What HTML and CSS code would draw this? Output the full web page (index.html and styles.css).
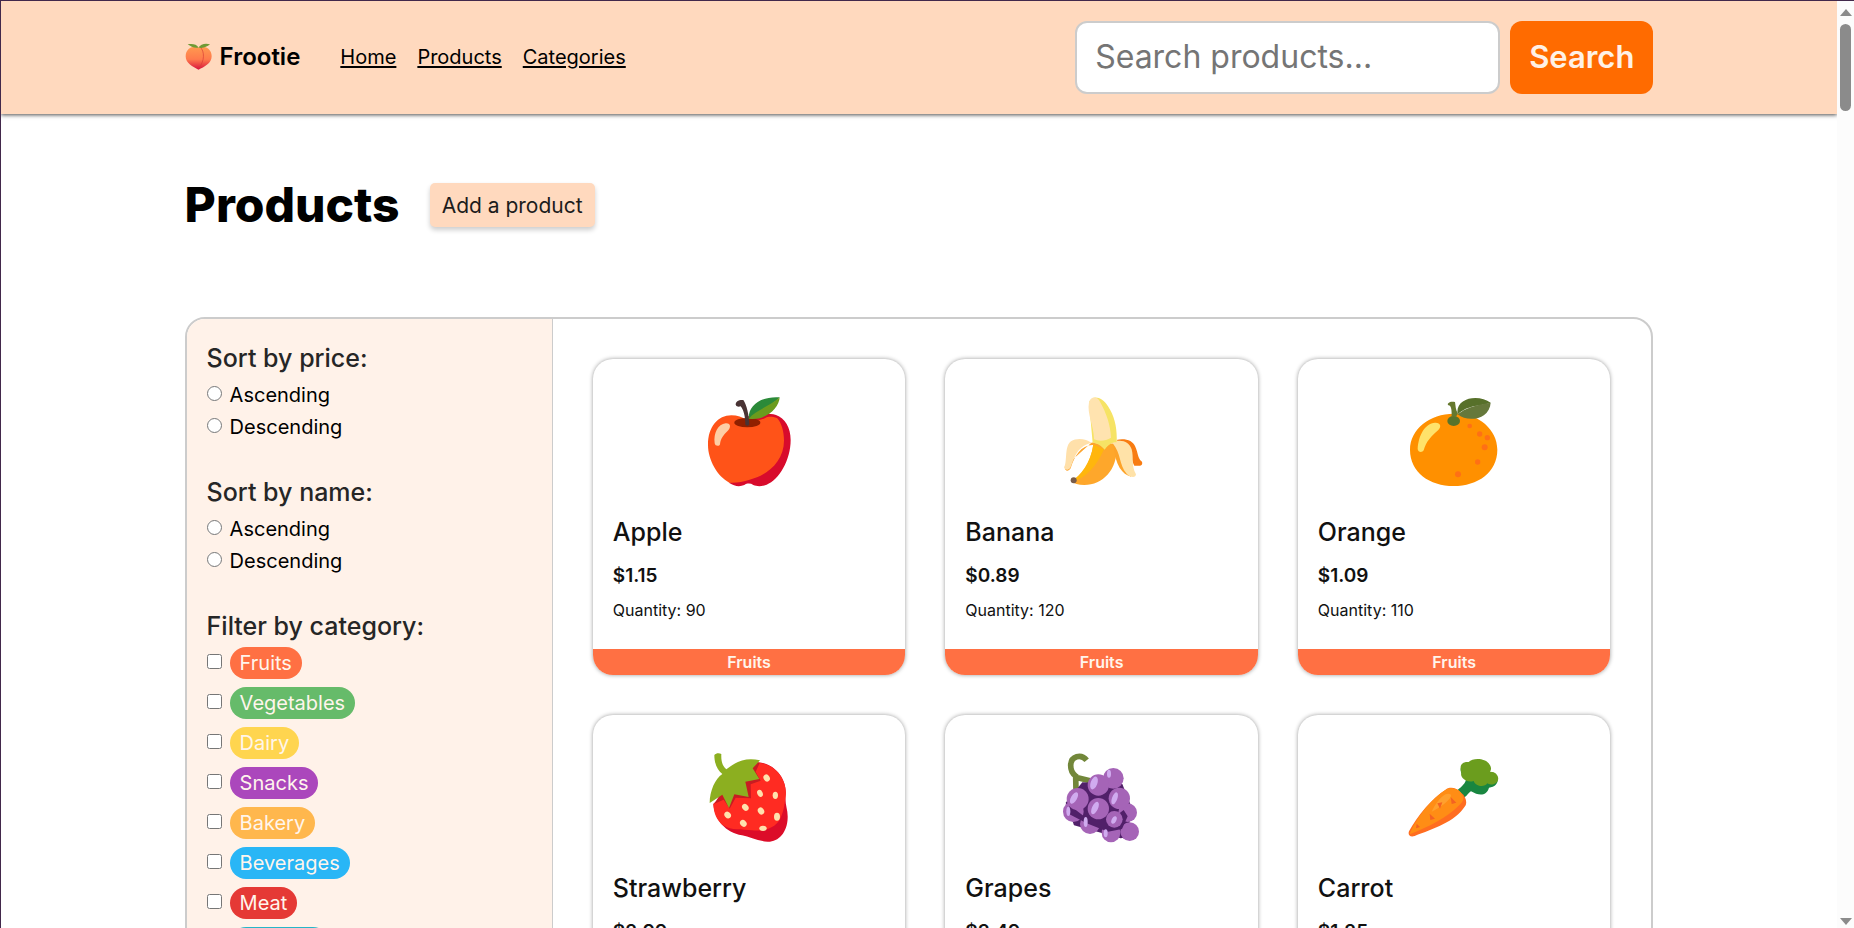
FILE: index.html
```html
<!DOCTYPE html>
<html lang="en">
<head>
<meta charset="utf-8">
<title>Frootie - Products</title>
<link rel="stylesheet" href="styles.css">
</head>
<body>
<div class="page">
  <header class="site-header">
    <div class="container header-row">
      <div class="brand">
        <svg class="brand-icon" viewBox="76 126 82 82" aria-hidden="true">
          <defs><linearGradient id="peach" x1="0" y1="0" x2="0" y2="1"><stop offset="0" stop-color="#ff9a50"/><stop offset=".55" stop-color="#ff7a4c"/><stop offset="1" stop-color="#d8123e"/></linearGradient></defs>
          <path fill="url(#peach)" d="M117 140C104 132 78 140 78 166c0 22 22 31 39 41 17-9 40-19 40-41 0-26-26-34-40-26z"/>
          <path fill="none" stroke="#d83a35" stroke-width="2" d="M122 138c14 14 14 42-4 65"/>
          <path fill="#6f9a35" d="M84 130c13-3 28-1 33 10-12 3-23-3-33-10zM152 130c-14-4-29-1-35 10 14 3 25-2 35-10z"/>
        </svg>
        <span>Frootie</span>
      </div>
      <nav class="nav"><a href="#">Home</a><a href="#">Products</a><a href="#">Categories</a></nav>
      <form class="search">
        <input class="search-input" type="text" placeholder="Search products..." aria-label="Search products">
        <button class="search-button" type="button">Search</button>
      </form>
    </div>
  </header>
  <main class="container">
    <div class="title-row">
      <h1>Products</h1>
      <button class="add-button" type="button">Add a product</button>
    </div>
    <div class="catalog">
      <aside class="filters">
        <fieldset>
          <legend>Sort by price:</legend>
          <label class="option"><input type="radio" name="price"><span>Ascending</span></label>
          <label class="option"><input type="radio" name="price"><span>Descending</span></label>
        </fieldset>
        <fieldset>
          <legend>Sort by name:</legend>
          <label class="option"><input type="radio" name="name"><span>Ascending</span></label>
          <label class="option"><input type="radio" name="name"><span>Descending</span></label>
        </fieldset>
        <fieldset class="categories">
          <legend>Filter by category:</legend>
          <label class="option"><input type="checkbox"><span class="pill fruits">Fruits</span></label>
          <label class="option"><input type="checkbox"><span class="pill vegetables">Vegetables</span></label>
          <label class="option"><input type="checkbox"><span class="pill dairy">Dairy</span></label>
          <label class="option"><input type="checkbox"><span class="pill snacks">Snacks</span></label>
          <label class="option"><input type="checkbox"><span class="pill bakery">Bakery</span></label>
          <label class="option"><input type="checkbox"><span class="pill beverages">Beverages</span></label>
          <label class="option"><input type="checkbox"><span class="pill meat">Meat</span></label>
          <label class="option"><input type="checkbox"><span class="pill seafood">Seafood</span></label>
        </fieldset>
      </aside>
      <section class="products">
        <article class="card">
          <svg class="picture" viewBox="369 150 276 276" aria-hidden="true">
            <path fill="#d80b2c" d="M500 215c28-9 60-14 88-5 27 9 44 38 44 75 0 60-35 120-72 134-18 7-30 5-40 1-9-6-19-5-27 0-14 6-30 4-45-6z"/>
            <path fill="#ff5318" d="M500 226c20 3 38 1 56-7 12-6 22-3 35 0 14 15 21 40 21 68 0 62-51 105-103 117-21 7-39 10-61 9-36-19-64-68-64-113 0-55 30-89 70-89 18 0 33 5 46 15z"/>
            <ellipse cx="502" cy="233" rx="39" ry="14" fill="#902000"/>
            <path fill="#493334" d="M467 179c0-9 8-15 23-14 10 14 17 45 18 74-4 5-9 4-12 0 0-26-5-43-14-55-7 2-12 1-15-5z"/>
            <path fill="#2b8a39" d="M506 221c-1-43 42-68 93-64-17 20-49 34-93 64z"/>
            <path fill="#6b9b1d" d="M506 221c21-27 60-34 93-64-1 30-40 72-93 64z"/>
            <path fill="#fdcea5" d="M404 295c-4-30 10-58 33-60 17-1 16 14 5 24-10 10-20 20-22 39-2 7-15 6-16-3z"/>
          </svg>
          <h2>Apple</h2><p class="price">$1.15</p><p class="quantity">Quantity: 90</p><div class="tag">Fruits</div>
        </article>
        <article class="card">
          <svg class="picture" viewBox="48 45 276 276" aria-hidden="true">
            <path fill="#f87c12" d="M229 180c25-6 50 1 57 20 9 20 7 36 20 45 3 11-4 14-23 12-13-24-6-48-40-67z"/>
            <path fill="#fea72b" d="M160 193c10-8 62-9 70 6 3 71-42 116-97 116-18 0-31-3-39-11 26-12 58-50 66-111z"/>
            <path fill="#ffb60d" d="M160 193l32 15c-22 49-52 87-98 97 28-20 58-54 66-112z"/>
            <path fill="#fda42e" d="M154 188c10-3 15-2 14 8-39-8-64 27-76 69-8 12-18 7-18-5z"/>
            <path fill="#ffe0aa" d="M154 188c-15-12-44-16-61-4-20 14-11 59-20 77 1 9 10 12 18 2 12-24 14-61 63-75z"/>
            <path fill="#fda329" d="M217 188l14 7c8 36 22 62 43 95-28-6-48-37-53-90z"/>
            <path fill="#ffe2a8" d="M217 188c26-13 51-2 58 20 7 26-2 48 13 75 0 11-17 10-28-2-24-28-15-59-43-93z"/>
            <path fill="#f6e365" d="M147 67c10-24 40-16 57 12 20 30 28 66 26 108-12-1-26 7-36 22-10-12-24-20-36-20z"/>
            <path fill="#ffe3af" d="M147 67c5-18 24-20 33-2 20 36 31 68 33 108-15 10-36 12-51 5 0-40-22-76-15-111z"/>
            <circle cx="101" cy="301" r="9" fill="#795c49"/>
          </svg>
          <h2>Banana</h2><p class="price">$0.89</p><p class="quantity">Quantity: 120</p><div class="tag">Fruits</div>
        </article>
        <article class="card">
          <svg class="picture" viewBox="55 45 276 276" aria-hidden="true">
            <path fill="#ff9000" d="M192 101c70-4 131 46 131 108 0 68-59 109-131 109S61 277 61 209c0-62 60-108 131-108z"/>
            <ellipse cx="192" cy="123" rx="19" ry="15" fill="#58732b"/>
            <path fill="#65782e" d="M174 72c5-8 14-8 22-6 2 13 2 23 8 34 0 8-9 13-18 8 0-14 0-24-5-31-4 0-6-2-7-5z"/>
            <path fill="#57702a" d="M204 103c-9-51 64-62 99-35-24 10-69 5-99 35z"/>
            <path fill="#66783b" d="M204 103c23-19 49-27 99-35-3 50-68 61-99 35z"/>
            <path fill="#ffe26a" d="M84 207c2-41 22-77 52-79 17-1 20 12 10 22-21 19-37 34-44 61-5 8-17 6-18-4z"/>
            <g fill="#ff7015"><circle cx="240" cy="138" r="7"/><circle cx="270" cy="162" r="8"/><circle cx="293" cy="173" r="8"/><circle cx="285" cy="202" r="9"/><circle cx="264" cy="246" r="8"/><circle cx="205" cy="283" r="9"/></g>
          </svg>
          <h2>Orange</h2><p class="price">$1.09</p><p class="quantity">Quantity: 110</p><div class="tag">Fruits</div>
        </article>
        <article class="card">
          <svg class="picture" viewBox="39 33 276 276" aria-hidden="true">
            <path fill="#dc0c29" d="M200 66c60 4 92 57 87 100-3 28 7 42 6 67-1 45-28 73-60 72-31-2-54-15-77-19-50-9-81-45-86-94z"/>
            <path fill="#ff2b22" d="M200 68c60 2 92 56 87 99-3 27-5 38-11 56-12 42-53 52-90 48-30-3-61 1-87-15-18-15-28-35-29-64z"/>
            <path fill="#c81c22" d="M209 69l-12 26 15 27-30 11 1 42-46-2-18 33-18-27-28 12 80-128z"/>
            <path fill="#8caf20" d="M73 45c5-6 15-6 21-3-1 21 3 36 15 46 30-24 59-37 101-27l-22 24 20 32-42 8 10 46-43-8-16 41-20-40-38 25c0-37 17-73 38-87-14-11-24-29-24-57z"/>
            <g fill="#ffe2ad"><ellipse cx="230" cy="114" rx="9" ry="11" transform="rotate(-35 230 114)"/><ellipse cx="210" cy="160" rx="8" ry="11" transform="rotate(-25 210 160)"/><ellipse cx="256" cy="166" rx="8" ry="11"/><ellipse cx="166" cy="202" rx="9" ry="11" transform="rotate(-40 166 202)"/><ellipse cx="213" cy="213" rx="9" ry="11" transform="rotate(-35 213 213)"/><ellipse cx="261" cy="230" rx="9" ry="12"/><ellipse cx="113" cy="225" rx="9" ry="11" transform="rotate(-40 113 225)"/><ellipse cx="160" cy="250" rx="9" ry="11" transform="rotate(-45 160 250)"/><ellipse cx="219" cy="265" rx="11" ry="8"/></g>
          </svg>
          <h2>Strawberry</h2><p class="price">$2.99</p><p class="quantity">Quantity: 80</p><div class="tag">Fruits</div>
        </article>
        <article class="card">
          <svg class="picture" viewBox="33 33 276 276" aria-hidden="true">
            <path fill="none" stroke="#72873a" stroke-width="17" d="M125 61C108 40 78 48 77 76c0 17 6 26 15 32l1 44M92 112l43 10"/>
            <path fill="#512069" d="M112 127l120 5 26 65-8 94-23 4-140-39-25-68z"/>
            <g fill="#a564b7"><circle cx="205" cy="115" r="31"/><circle cx="85" cy="215" r="31"/><circle cx="248" cy="218" r="28"/><circle cx="135" cy="252" r="30"/><circle cx="198" cy="279" r="28"/><circle cx="254" cy="275" r="28"/></g>
            <path fill="#512069" d="M73 195l40 31 47-15 33 32 43-33 12 19-17 38-42 8-64-25-53-28z"/>
            <g fill="#a564b7"><circle cx="160" cy="135" r="32"/><circle cx="98" cy="177" r="33"/><circle cx="223" cy="175" r="32"/><circle cx="160" cy="206" r="32"/><circle cx="208" cy="238" r="25"/></g>
            <g fill="#d0abef"><ellipse cx="147" cy="129" rx="10" ry="20" transform="rotate(20 147 129)"/><ellipse cx="87" cy="174" rx="9" ry="19" transform="rotate(30 87 174)"/><ellipse cx="209" cy="175" rx="8" ry="19" transform="rotate(20 209 175)"/><ellipse cx="150" cy="204" rx="9" ry="20" transform="rotate(25 150 204)"/><ellipse cx="207" cy="240" rx="7" ry="12" transform="rotate(25 207 240)"/><ellipse cx="192" cy="101" rx="6" ry="12"/><ellipse cx="70" cy="214" rx="6" ry="14"/><ellipse cx="122" cy="246" rx="6" ry="15"/><ellipse cx="182" cy="280" rx="6" ry="12"/></g>
          </svg>
          <h2>Grapes</h2><p class="price">$3.49</p><p class="quantity">Quantity: 70</p><div class="tag">Fruits</div>
        </article>
        <article class="card">
          <svg class="picture" viewBox="55 33 276 276" aria-hidden="true">
            <path fill="#198640" d="M203 151c14-13 26-22 26-35-16-10-20-29-12-38l97 21c18 13 12 43-16 44-8 26-30 25-54 11-7 3-10 13-24 21z"/>
            <path fill="#6b9d1e" d="M237 66c12-14 50-12 60 4 8 10 9 18 4 25 24-1 34 26 14 36-9 4-17 3-22-1-7 12-35 11-41-7-22 8-42-12-37-24-7-25 3-34 22-33z"/>
            <path fill="#ff6d20" d="M168 149c11-9 32-8 47 10 13 9 19 29 11 40-30 47-96 68-151 89-14 4-21-3-17-14 25-46 70-101 110-125z"/>
            <path fill="#ff8d15" d="M168 149c17-9 40-2 48 12 10 15 4 24-9 36-38 38-85 60-147 86 18-48 66-108 108-134z"/>
            <path fill="#ffa02e" d="M165 164c10-5 20-3 19 4-4 15-37 37-58 47 9-20 22-40 39-51z"/>
            <path fill="#f46222" d="M183 171l17 17-14 4zM143 190l15-3-7 19zM120 221l16 15-14 4zM81 251l10 10-12 4z"/>
          </svg>
          <h2>Carrot</h2><p class="price">$1.25</p><p class="quantity">Quantity: 95</p><div class="tag vegetables">Vegetables</div>
        </article>
      </section>
    </div>
  </main>
</div>
<div class="scrollbar" aria-hidden="true">
  <svg class="arrow" viewBox="0 0 12 7"><path d="M6 0l6 7H0z"/></svg>
  <div class="track"><div class="thumb"></div></div>
  <svg class="arrow" viewBox="0 0 12 7"><path d="M6 7L0 0h12z"/></svg>
</div>
</body>
</html>
```
FILE: styles.css
```css
* { box-sizing: border-box; }

body {
  margin: 0;
  height: 100vh;
  display: flex;
  overflow: hidden;
  border-top: 1px solid #42284b;
  border-left: 1px solid #42284b;
  background: #fff;
  color: #000;
  font-family: Inter, "Noto Sans", sans-serif;
  font-size: 20px;
}

h1, h2, p, fieldset { margin: 0; padding: 0; border: 0; }
button, input { font-family: inherit; }

.page { flex: 1; min-width: 0; }
.container { width: 80%; margin: 0 auto; }

.site-header {
  background: #ffd9be;
  padding: 20px 0;
  box-shadow: 0 1px 4px rgba(0, 0, 0, 0.7);
}
.header-row { display: flex; align-items: center; }
.brand {
  display: flex;
  align-items: center;
  gap: 8px;
  margin-right: 40px;
  padding-bottom: 2px;
  font-size: 24px;
  font-weight: 600;
  line-height: 28px;
}
.brand-icon { width: 27px; height: 27px; }
.nav { display: flex; gap: 21px; padding-bottom: 1px; }
.nav a { color: #000; text-underline-offset: 2px; text-decoration-thickness: 2px; }

.search { display: flex; gap: 10px; margin-left: auto; }
.search-input {
  width: 425px;
  height: 73px;
  padding: 0 18px 2px;
  border: 2px solid #ccc;
  border-radius: 12px;
  font-size: 32px;
}
.search-input::placeholder { color: #757575; }
.search-button {
  height: 73px;
  padding: 0 19px 2px;
  border: 0;
  border-radius: 12px;
  background: #ff6b00;
  color: #fff1e6;
  font-size: 31px;
  font-weight: 600;
}

.title-row { display: flex; align-items: center; gap: 30px; padding: 59px 0 80px; }
h1 { font-size: 48px; line-height: 64px; font-weight: 800; }
.add-button {
  height: 44px;
  padding: 0 12px;
  border: 0;
  border-radius: 5px;
  background: #ffd9be;
  color: #1c1c1c;
  font-size: 21px;
  box-shadow: 0 3px 5px rgba(0, 0, 0, 0.2);
}

.catalog {
  display: grid;
  grid-template-columns: 1fr 3fr;
  border: 2px solid #ccc;
  border-radius: 20px;
  overflow: hidden;
}
.filters { padding: 21px 20px 20px; background: #fff2e9; border-right: 1px solid #ccc; }
fieldset { margin-bottom: 31px; }
legend {
  padding: 0;
  margin-bottom: 3px;
  color: #262626;
  font-size: 25px;
  line-height: 36px;
  font-weight: 550;
}
.option { display: flex; align-items: center; height: 32px; gap: 8px; }
.option input { width: 15px; height: 15px; margin: 0 0 4px; }
.categories .option { margin-bottom: 8px; }
.pill { padding: 0 10px; border-radius: 16px; line-height: 32px; color: #fff5ec; }
.fruits { background: #ff7043; }
.vegetables { background: #66bb6a; }
.dairy { background: #ffd54f; }
.snacks { background: #ab47bc; }
.bakery { background: #ffb74d; }
.beverages { background: #29b6f6; }
.meat { background: #e53935; }
.seafood { background: #26b6c8; }

.products {
  display: grid;
  grid-template-columns: repeat(3, 1fr);
  align-content: start;
  gap: 40px;
  padding: 40px 41px 40px 40px;
}
.card {
  display: flex;
  flex-direction: column;
  border-radius: 20px;
  overflow: hidden;
  box-shadow: 0 0 4px rgba(0, 0, 0, 0.4);
}
.picture { width: 92px; height: 92px; margin: 36px auto 28px; }
.card h2, .card p { padding: 0 20px; color: #111; }
.card h2 { font-size: 25px; line-height: 34px; font-weight: 550; }
.card .price { margin-top: 15px; font-size: 19px; line-height: 24px; font-weight: 600; }
.card .quantity { margin: 12px 0 29px; font-size: 16px; line-height: 20px; }
.tag {
  background: #ff7043;
  color: #fff5ec;
  font-size: 16px;
  line-height: 26px;
  font-weight: 600;
  text-align: center;
}
.tag.vegetables { background: #66bb6a; }

.scrollbar {
  width: 17px;
  display: flex;
  flex-direction: column;
  align-items: center;
  padding: 8px 0 3px;
  background: #fcfcfc;
}
.arrow { width: 12px; height: 7px; fill: #8b8b8b; }
.track { flex: 1; padding: 8px 0; }
.thumb { width: 11px; height: 87px; border-radius: 6px; background: #8b8b8b; }
```
